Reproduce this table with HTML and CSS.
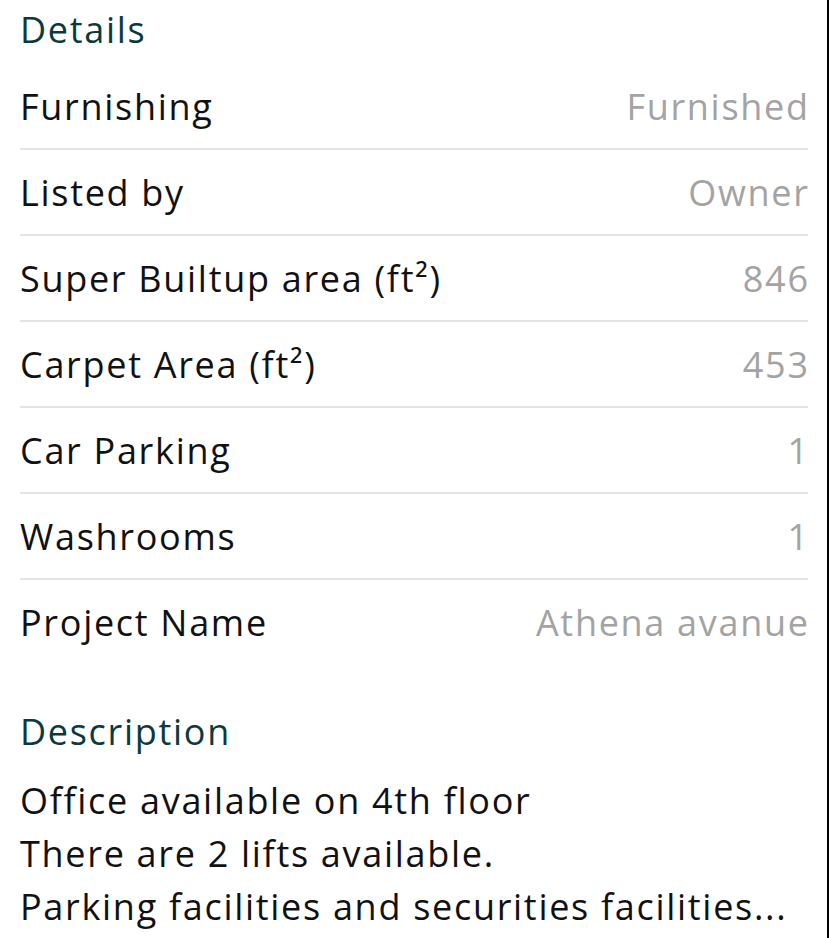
FILE: index.html
```html
<!DOCTYPE html>
<html lang="en">
<head>
<meta charset="utf-8">
<title>Details</title>
<link rel="stylesheet" href="styles.css">
</head>
<body>
<main class="panel">
  <h2 class="section-title">Details</h2>
  <ul class="details">
    <li class="row"><span class="label">Furnishing</span><span class="value">Furnished</span></li>
    <li class="row"><span class="label">Listed by</span><span class="value">Owner</span></li>
    <li class="row"><span class="label">Super Builtup area (ft²)</span><span class="value">846</span></li>
    <li class="row"><span class="label">Carpet Area (ft²)</span><span class="value">453</span></li>
    <li class="row"><span class="label">Car Parking</span><span class="value">1</span></li>
    <li class="row"><span class="label">Washrooms</span><span class="value">1</span></li>
    <li class="row"><span class="label">Project Name</span><span class="value">Athena avanue</span></li>
  </ul>
  <h2 class="section-title section-title--spaced">Description</h2>
  <p class="description">Office available on 4th floor<br>There are 2 lifts available.<br>Parking facilities and securities facilities...</p>
</main>
</body>
</html>
```
FILE: styles.css
```css
html, body {
  margin: 0;
  padding: 0;
  background: #ffffff;
}

body {
  font-family: "Open Sans", "Noto Sans", sans-serif;
  color: #111111;
  letter-spacing: 1.7px;
}

.panel {
  box-sizing: border-box;
  width: 829px;
  height: 938px;
  overflow: hidden;
  padding: 0 19px 0 20px;
  border-right: 2px solid #000000;
}

.section-title {
  margin: 0;
  height: 58px;
  display: flex;
  align-items: center;
  font-size: 36px;
  font-weight: 400;
  color: #0b3a3d;
}

.section-title--spaced {
  margin-top: 38px;
}

.details {
  list-style: none;
  margin: 6px 0 0;
  padding: 0;
}

.row {
  height: 84px;
  display: flex;
  align-items: center;
  justify-content: space-between;
  border-bottom: 2px solid #e2e4e4;
  font-size: 36px;
}

.row:last-child {
  border-bottom: none;
}

.label {
  color: #111111;
}

.value {
  color: #a3a3a3;
  margin-right: -1.7px;
}

.description {
  margin: 14px 0 0;
  font-size: 36px;
  line-height: 53px;
  color: #111111;
  white-space: nowrap;
}
```
